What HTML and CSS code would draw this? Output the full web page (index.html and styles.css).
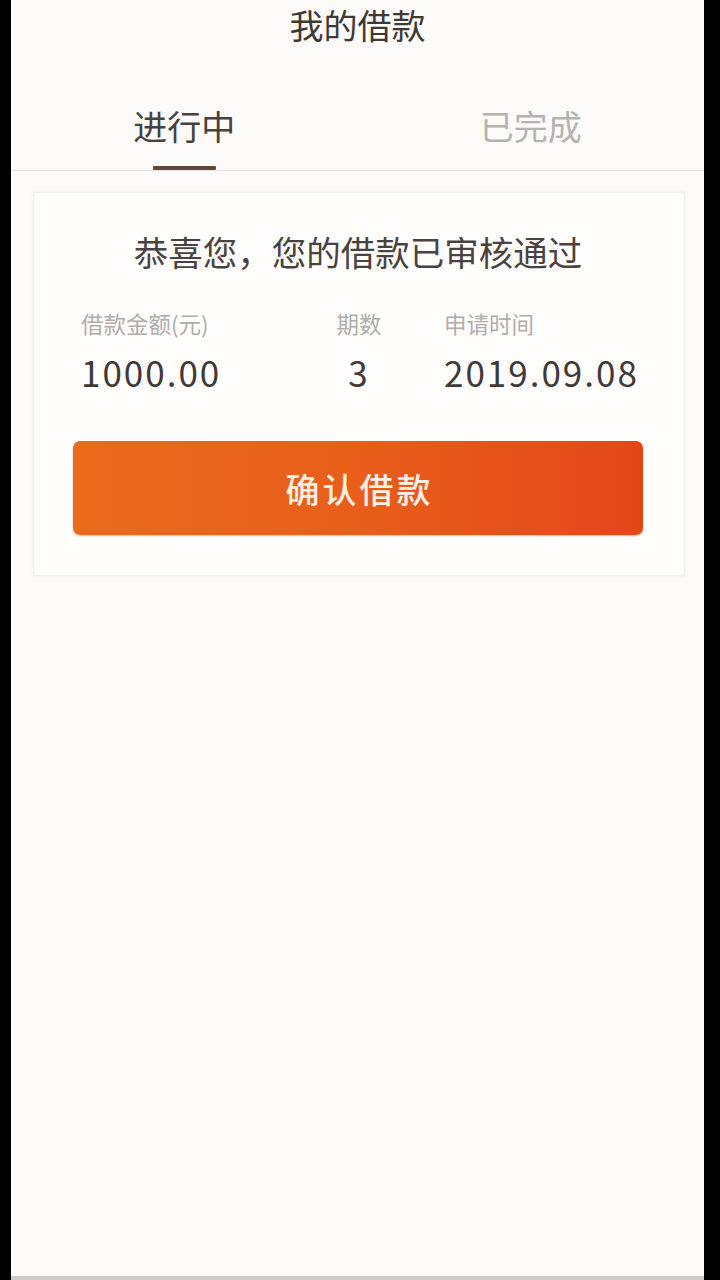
FILE: index.html
```html
<!DOCTYPE html>
<html lang="zh-CN">
<head>
<meta charset="utf-8">
<title>我的借款</title>
<link rel="stylesheet" href="styles.css">
</head>
<body>
<div class="screen">
  <header class="header">我的借款</header>
  <nav class="tabs">
    <div class="tab tab-active">
      <span class="tab-label">进行中</span>
      <span class="tab-bar"></span>
    </div>
    <div class="tab">
      <span class="tab-label">已完成</span>
      <span class="tab-bar"></span>
    </div>
  </nav>
  <section class="card">
    <h2 class="card-title">恭喜您，您的借款已审核通过</h2>
    <div class="info">
      <div class="col col-left">
        <div class="label">借款金额(元)</div>
        <div class="value">1000.00</div>
      </div>
      <div class="col col-center">
        <div class="label">期数</div>
        <div class="value">3</div>
      </div>
      <div class="col col-left">
        <div class="label">申请时间</div>
        <div class="value">2019.09.08</div>
      </div>
    </div>
    <button class="confirm">确认借款</button>
  </section>
</div>
</body>
</html>
```

FILE: styles.css
```css
html, body {
  margin: 0;
  padding: 0;
  background: #000;
}

body {
  font-family: "Noto Sans CJK SC", "Noto Sans", sans-serif;
}

.screen {
  margin: 0 16px 0 11px;
  height: 1280px;
  box-sizing: border-box;
  background: #fdfbfa;
  border-bottom: 4px solid #cfcccb;
  display: flex;
  flex-direction: column;
}

.header {
  height: 52px;
  line-height: 50px;
  text-align: center;
  font-size: 34px;
  color: #3f3835;
}

.tabs {
  display: flex;
  border-bottom: 1px solid #e9e3e1;
}

.tab {
  flex: 1;
  display: flex;
  flex-direction: column;
  align-items: center;
  padding-top: 54px;
}

.tab-label {
  font-size: 34px;
  line-height: 40px;
  color: #b7b2b0;
}

.tab-bar {
  width: 63px;
  height: 4px;
  margin-top: 20px;
  border-radius: 1px;
  background: transparent;
}

.tab-active .tab-label {
  color: #4a403d;
}

.tab-active .tab-bar {
  background: #65463f;
}

.card {
  margin: 21px 19px 0 22px;
  background: #fffefd;
  border: 1px solid #f3eeeb;
  box-shadow: 0 0 3px rgba(200, 185, 175, 0.2);
  padding: 38px 41px 40px 39px;
}

.card-title {
  margin: 0;
  text-align: center;
  font-weight: normal;
  font-size: 34.5px;
  line-height: 40px;
  color: #4a4240;
}

.info {
  display: grid;
  grid-template-columns: 193px 170px 1fr;
  margin-top: 37px;
  padding-left: 8px;
}

.col-center {
  text-align: center;
}

.label {
  font-size: 22.5px;
  line-height: 30px;
  color: #b1acaa;
}

.value {
  margin-top: 12px;
  font-size: 35px;
  line-height: 44px;
  letter-spacing: 2px;
  color: #3f3937;
}

.confirm {
  display: block;
  width: 100%;
  height: 94px;
  margin-top: 47px;
  border: none;
  border-radius: 7px;
  background: linear-gradient(90deg, #ea6a1c 0%, #e85e1a 50%, #e4461a 100%);
  box-shadow: 0 1px 2px rgba(160, 70, 30, 0.35);
  color: #fdefe2;
  font-family: "Noto Sans CJK SC", "Noto Sans", sans-serif;
  font-size: 34px;
  font-weight: 500;
  letter-spacing: 3px;
  padding: 0 0 0 3px;
}
```
